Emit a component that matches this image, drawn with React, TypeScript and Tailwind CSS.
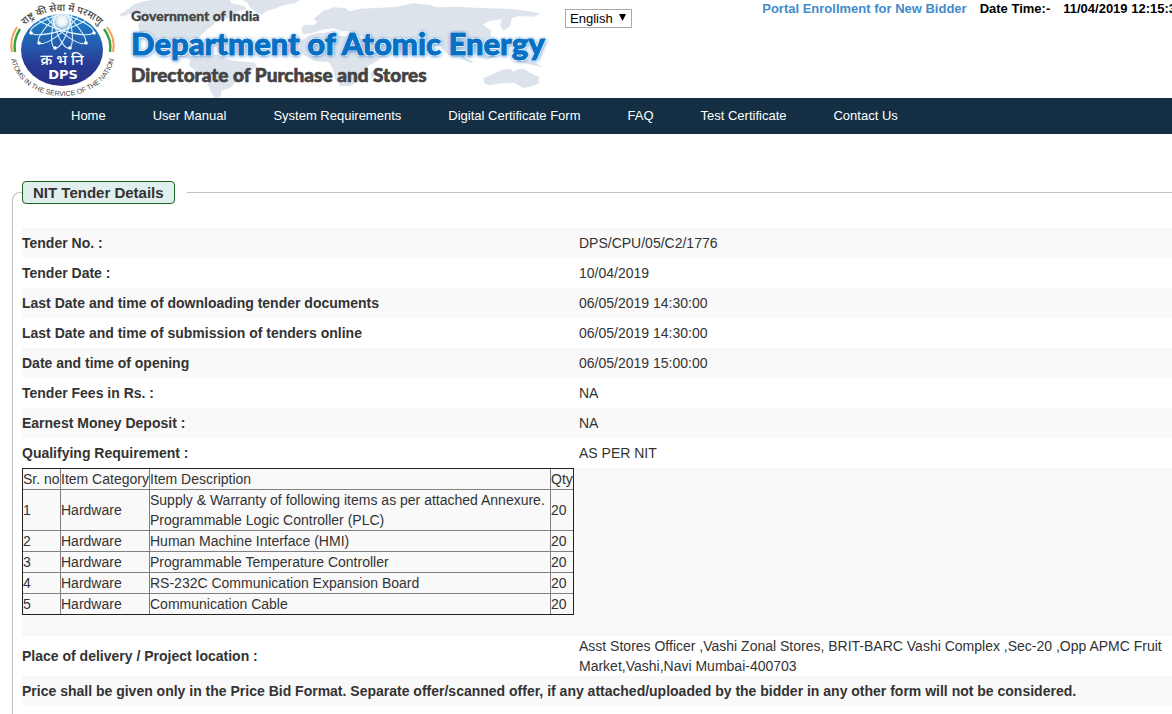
import type { ReactNode } from "react";

const navLinks = [
  "Home",
  "User Manual",
  "System Requirements",
  "Digital Certificate Form",
  "FAQ",
  "Test Certificate",
  "Contact Us",
];

type Item = {
  category: string;
  description: string[];
  qty: number;
};

const items: Item[] = [
  {
    category: "Hardware",
    description: [
      "Supply & Warranty of following items as per attached Annexure.",
      "Programmable Logic Controller (PLC)",
    ],
    qty: 20,
  },
  { category: "Hardware", description: ["Human Machine Interface (HMI)"], qty: 20 },
  { category: "Hardware", description: ["Programmable Temperature Controller"], qty: 20 },
  { category: "Hardware", description: ["RS-232C Communication Expansion Board"], qty: 20 },
  { category: "Hardware", description: ["Communication Cable"], qty: 20 },
];

const details = [
  { label: "Tender No. :", value: "DPS/CPU/05/C2/1776" },
  { label: "Tender Date :", value: "10/04/2019" },
  { label: "Last Date and time of downloading tender documents", value: "06/05/2019 14:30:00" },
  { label: "Last Date and time of submission of tenders online", value: "06/05/2019 14:30:00" },
  { label: "Date and time of opening", value: "06/05/2019 15:00:00" },
  { label: "Tender Fees in Rs. :", value: "NA" },
  { label: "Earnest Money Deposit :", value: "NA" },
  { label: "Qualifying Requirement :", value: "AS PER NIT" },
];

const orbits = [
  { angle: 15, reach: 27 },
  { angle: -15, reach: 27 },
  { angle: 48, reach: 31 },
  { angle: -48, reach: 31 },
  { angle: 72, reach: 33 },
  { angle: -72, reach: 33 },
];

const electrons = [
  [39, 43],
  [55, 48],
  [70, 48],
  [86, 43],
  [31, 33],
  [94, 33],
];

function Emblem() {
  return (
    <svg viewBox="0 0 125 98" className="h-[98px] w-[125px] shrink-0" role="img" aria-label="DPS emblem">
      <defs>
        <linearGradient id="disc" x1="0" y1="0" x2="0" y2="1">
          <stop offset="0" stopColor="#1c86ca" />
          <stop offset="0.45" stopColor="#2459ad" />
          <stop offset="0.7" stopColor="#283a94" />
          <stop offset="1" stopColor="#2a2f86" />
        </linearGradient>
        <radialGradient id="glow">
          <stop offset="0" stopColor="#fff" />
          <stop offset="0.4" stopColor="#fff" stopOpacity="0.9" />
          <stop offset="1" stopColor="#fff" stopOpacity="0" />
        </radialGradient>
        <clipPath id="discClip">
          <ellipse cx="62" cy="50" rx="41" ry="36" />
        </clipPath>
        <path id="arcTop" d="M16 46 A46 35 0 0 1 108 46" />
        <path id="arcBottom" d="M11 54 A51.5 42 0 0 0 114 54" />
      </defs>
      <ellipse cx="62" cy="50" rx="41" ry="36" fill="url(#disc)" />
      <g clipPath="url(#discClip)">
        <g fill="none" stroke="#dceffa" strokeWidth="1.1">
          {orbits.map(({ angle, reach }) => (
            <ellipse key={angle} cx="62" cy="22" rx="8" ry={reach} transform={`rotate(${angle} 62 22)`} />
          ))}
        </g>
        <circle cx="62" cy="21" r="12" fill="url(#glow)" />
      </g>
      <g fill="#fff">
        {electrons.map(([x, y]) => (
          <circle key={x} cx={x} cy={y} r="1.8" />
        ))}
      </g>
      <g fill="none" strokeWidth="2">
        <path d="M17 27 Q9 39 12 52" stroke="#f5a052" />
        <path d="M20 29 Q13 40 15 52" stroke="#35a046" strokeWidth="2.4" />
        <path d="M107 27 Q116 39 113 52" stroke="#f5a052" />
        <path d="M104 29 Q112 40 110 52" stroke="#35a046" strokeWidth="2.4" />
      </g>
      <text fontSize="10" fontWeight="500" fill="#444" fontFamily="'Noto Sans Devanagari', 'Noto Sans', sans-serif">
        <textPath href="#arcTop" startOffset="50%" textAnchor="middle">
          राष्ट्र की सेवा में परमाणु
        </textPath>
      </text>
      <text fontSize="7" fill="#444" fontFamily="'Liberation Sans', sans-serif">
        <textPath href="#arcBottom" startOffset="50%" textAnchor="middle">
          ATOMS IN THE SERVICE OF THE NATION
        </textPath>
      </text>
      <text x="62" y="65" fontSize="15" fontWeight="500" fill="#fff" textAnchor="middle" fontFamily="'Noto Sans Devanagari', 'Noto Sans', sans-serif">
        क्र भं नि
      </text>
      <text x="63" y="79" fontSize="13" fontWeight="700" fill="#fff" textAnchor="middle" fontFamily="'DejaVu Sans', sans-serif">
        DPS
      </text>
    </svg>
  );
}

function WorldMap() {
  return (
    <svg
      viewBox="15 0 1275 294"
      className="absolute inset-0 h-full w-full overflow-visible"
      fill="#dde3eb"
      aria-hidden="true"
    >
      <path d="M-4 44 L12 36 L28 24 L40 14 L70 4 L100 0 L330 0 L334 10 L372 18 L380 28 L352 34 L344 50 L318 56 L290 62 L276 78 L262 88 L250 100 L236 112 L232 128 L222 124 L200 120 L168 128 L166 148 L182 156 L196 148 L198 160 L212 168 L226 176 L214 180 L192 172 L162 162 L140 150 L120 128 L84 112 L60 96 L54 78 L62 60 L48 46 L30 42 L8 50 Z" />
      <path d="M368 0 L540 0 L524 10 L490 16 L470 24 L440 34 L424 44 L404 34 L390 22 L384 10 Z" />
      <path d="M214 172 L240 164 L290 164 L318 176 L340 182 L404 188 L410 198 L392 214 L378 236 L348 246 L330 264 L304 272 L302 290 L286 294 L276 282 L264 256 L262 236 L236 220 L206 196 Z" />
      <path d="M568 106 L592 100 L640 96 L660 108 L720 112 L744 130 L762 156 L790 160 L776 180 L744 198 L740 222 L716 240 L692 258 L660 258 L646 236 L640 208 L626 186 L586 184 L552 166 L536 148 L546 122 Z M752 220 L766 208 L764 228 L752 240 Z" />
      <path d="M544 84 L556 74 L584 74 L592 64 L580 58 L608 34 L640 22 L674 24 L690 34 L720 26 L770 24 L830 20 L880 10 L930 14 L950 22 L1010 20 L1080 24 L1160 26 L1230 34 L1262 42 L1240 50 L1196 48 L1176 54 L1170 78 L1150 92 L1140 76 L1146 58 L1110 62 L1088 74 L1114 92 L1112 110 L1096 120 L1110 140 L1086 150 L1060 160 L1050 176 L1036 164 L1010 150 L1002 170 L984 164 L962 140 L930 134 L900 128 L870 142 L830 156 L800 160 L780 150 L750 124 L730 110 L700 104 L700 94 L664 94 L640 84 L604 90 L574 100 L548 102 Z" />
      <path d="M596 54 L606 50 L612 68 L600 72 Z" />
      <path d="M1016 160 L1036 172 L1060 186 L1052 190 L1028 178 Z M1084 156 L1116 150 L1126 170 L1100 180 L1086 172 Z M1180 172 L1220 178 L1268 200 L1240 196 L1190 184 Z" />
      <path d="M1090 234 L1120 222 L1144 210 L1172 206 L1180 216 L1196 206 L1214 208 L1232 220 L1258 232 L1256 250 L1240 258 L1210 264 L1182 248 L1144 250 L1112 256 L1094 252 Z" />
    </svg>
  );
}

function Row({ children }: { children: ReactNode }) {
  return <tr className="odd:bg-[#f9f9f9]">{children}</tr>;
}

function ItemsTable() {
  const cell = "border border-[#808080] p-0 text-left font-normal";

  return (
    <table className="mb-[21px] w-[552px] border-collapse outline outline-1 -outline-offset-1 outline-[#222]">
      <thead>
        <tr>
          <th className={`${cell} w-[38px] whitespace-nowrap`}>Sr. no</th>
          <th className={`${cell} w-[89px] whitespace-nowrap`}>Item Category</th>
          <th className={cell}>Item Description</th>
          <th className={`${cell} w-[23px]`}>Qty</th>
        </tr>
      </thead>
      <tbody>
        {items.map((item, index) => (
          <tr key={index}>
            <td className={cell}>{index + 1}</td>
            <td className={cell}>{item.category}</td>
            <td className={cell}>
              {item.description.map((line) => (
                <div key={line} className="whitespace-nowrap">{line}</div>
              ))}
            </td>
            <td className={cell}>{item.qty}</td>
          </tr>
        ))}
      </tbody>
    </table>
  );
}

export default function App() {
  return (
    <div className="flex min-h-screen flex-col overflow-hidden bg-white font-['Liberation_Sans',Arial,sans-serif] text-sm leading-5 text-[#333]">
      <header className="flex h-[98px] items-start">
        <Emblem />
        <div className="relative h-full w-[425px] shrink-0 pl-[6px] font-['Lato',sans-serif] font-black whitespace-nowrap text-[#444]">
          <WorldMap />
          <div className="relative flex flex-col">
            <p className="pt-[5px] text-[14px] leading-[22px] [-webkit-text-stroke:0.3px_#444]">Government of India</p>
            <h1 className="text-[31px] leading-8 text-[#0870c4] [-webkit-text-stroke:1px_#0870c4] [text-shadow:1px_1px_#fff,-1px_-1px_#fff,1px_-1px_#fff,-1px_1px_#fff,0_0_2px_#3f83d3,0_0_3px_#3f83d3,1px_1px_4px_#3f83d3]">
              Department of Atomic Energy
            </h1>
            <p className="text-[19px] leading-8 [-webkit-text-stroke:0.6px_#444]">Directorate of Purchase and Stores</p>
          </div>
        </div>
        <label htmlFor="language" className="sr-only">Language</label>
        <div className="relative mt-[9px] ml-[15px]">
          <select
            id="language"
            className="block h-[19px] w-[67px] appearance-none border border-[#a9a9a9] bg-white pl-1 text-[13px] leading-4 text-black"
          >
            <option>English</option>
          </select>
          <svg viewBox="0 0 6 6" className="pointer-events-none absolute top-[5px] right-[6px] size-[7px]" aria-hidden="true">
            <path d="M0 0 H6 L3 6 Z" fill="#000" />
          </svg>
        </div>
        <div className="-mr-1 ml-auto flex gap-[13px] pt-px whitespace-nowrap text-[13px] leading-4 font-bold text-black">
          <a href="#enroll" className="text-[#428bca]">Portal Enrollment for New Bidder</a>
          <span>Date Time:-</span>
          <span>11/04/2019 12:15:3</span>
        </div>
      </header>

      <nav className="flex h-9 items-center gap-[47px] bg-[#142f43] pl-[71px] text-[13px] whitespace-nowrap text-white">
        {navLinks.map((link) => (
          <a key={link} href="#">{link}</a>
        ))}
      </nav>

      <fieldset className="mt-[47px] -mr-3 ml-3 grow rounded-t-lg border border-b-0 border-[#c0c0c0] pl-[9px]">
        <legend className="pr-3">
          <span className="block rounded border border-[#1a661a] bg-[#e0eeee] px-[10px] text-[15px] leading-[21px] font-bold">
            NIT Tender Details
          </span>
        </legend>
        <table className="mt-6 w-full border-collapse">
          <tbody>
            {details.map(({ label, value }) => (
              <Row key={label}>
                <th scope="row" className="w-[557px] py-[5px] text-left font-bold">{label}</th>
                <td className="py-[5px]">{value}</td>
              </Row>
            ))}
            <Row>
              <td colSpan={2} className="p-0">
                <ItemsTable />
              </td>
            </Row>
            <Row>
              <th scope="row" className="text-left font-bold">Place of delivery / Project location :</th>
              <td className="pr-3">
                Asst Stores Officer ,Vashi Zonal Stores, BRIT-BARC Vashi Complex ,Sec-20 ,Opp APMC Fruit
                Market,Vashi,Navi Mumbai-400703
              </td>
            </Row>
            <Row>
              <td colSpan={2} className="py-[5px] font-bold">
                Price shall be given only in the Price Bid Format. Separate offer/scanned offer, if any attached/uploaded by the
                bidder in any other form will not be considered.
              </td>
            </Row>
          </tbody>
        </table>
      </fieldset>
    </div>
  );
}
